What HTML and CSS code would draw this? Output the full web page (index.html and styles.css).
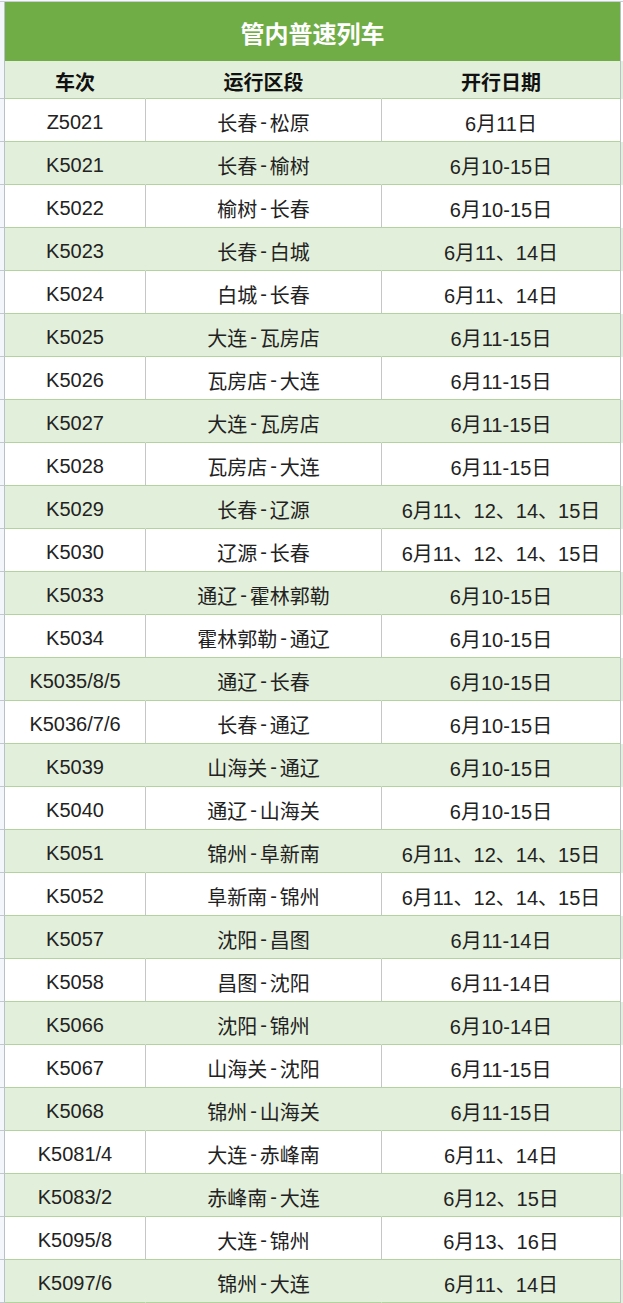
FILE: index.html
```html
<!DOCTYPE html>
<html lang="zh">
<head>
<meta charset="utf-8">
<link rel="stylesheet" href="styles.css">
</head>
<body>
<div class="sheet">
  <div class="topline"></div>
  <div class="row title-row"><div class="gut"></div><div class="title">管内普速列车</div></div>
  <div class="row head-row"><div class="gut"></div><div class="c c1">车次</div><div class="c c2">运行区段</div><div class="c c3">开行日期</div></div>
  <div class="row w"><div class="gut"></div><div class="c c1">Z5021</div><div class="c c2">长春<span class="d">-</span>松原</div><div class="c c3">6月11日</div></div>
  <div class="row g"><div class="gut"></div><div class="c c1">K5021</div><div class="c c2">长春<span class="d">-</span>榆树</div><div class="c c3">6月10-15日</div></div>
  <div class="row w"><div class="gut"></div><div class="c c1">K5022</div><div class="c c2">榆树<span class="d">-</span>长春</div><div class="c c3">6月10-15日</div></div>
  <div class="row g"><div class="gut"></div><div class="c c1">K5023</div><div class="c c2">长春<span class="d">-</span>白城</div><div class="c c3">6月11、14日</div></div>
  <div class="row w"><div class="gut"></div><div class="c c1">K5024</div><div class="c c2">白城<span class="d">-</span>长春</div><div class="c c3">6月11、14日</div></div>
  <div class="row g"><div class="gut"></div><div class="c c1">K5025</div><div class="c c2">大连<span class="d">-</span>瓦房店</div><div class="c c3">6月11-15日</div></div>
  <div class="row w"><div class="gut"></div><div class="c c1">K5026</div><div class="c c2">瓦房店<span class="d">-</span>大连</div><div class="c c3">6月11-15日</div></div>
  <div class="row g"><div class="gut"></div><div class="c c1">K5027</div><div class="c c2">大连<span class="d">-</span>瓦房店</div><div class="c c3">6月11-15日</div></div>
  <div class="row w"><div class="gut"></div><div class="c c1">K5028</div><div class="c c2">瓦房店<span class="d">-</span>大连</div><div class="c c3">6月11-15日</div></div>
  <div class="row g"><div class="gut"></div><div class="c c1">K5029</div><div class="c c2">长春<span class="d">-</span>辽源</div><div class="c c3">6月11、12、14、15日</div></div>
  <div class="row w"><div class="gut"></div><div class="c c1">K5030</div><div class="c c2">辽源<span class="d">-</span>长春</div><div class="c c3">6月11、12、14、15日</div></div>
  <div class="row g"><div class="gut"></div><div class="c c1">K5033</div><div class="c c2">通辽<span class="d">-</span>霍林郭勒</div><div class="c c3">6月10-15日</div></div>
  <div class="row w"><div class="gut"></div><div class="c c1">K5034</div><div class="c c2">霍林郭勒<span class="d">-</span>通辽</div><div class="c c3">6月10-15日</div></div>
  <div class="row g"><div class="gut"></div><div class="c c1">K5035/8/5</div><div class="c c2">通辽<span class="d">-</span>长春</div><div class="c c3">6月10-15日</div></div>
  <div class="row w"><div class="gut"></div><div class="c c1">K5036/7/6</div><div class="c c2">长春<span class="d">-</span>通辽</div><div class="c c3">6月10-15日</div></div>
  <div class="row g"><div class="gut"></div><div class="c c1">K5039</div><div class="c c2">山海关<span class="d">-</span>通辽</div><div class="c c3">6月10-15日</div></div>
  <div class="row w"><div class="gut"></div><div class="c c1">K5040</div><div class="c c2">通辽<span class="d">-</span>山海关</div><div class="c c3">6月10-15日</div></div>
  <div class="row g"><div class="gut"></div><div class="c c1">K5051</div><div class="c c2">锦州<span class="d">-</span>阜新南</div><div class="c c3">6月11、12、14、15日</div></div>
  <div class="row w"><div class="gut"></div><div class="c c1">K5052</div><div class="c c2">阜新南<span class="d">-</span>锦州</div><div class="c c3">6月11、12、14、15日</div></div>
  <div class="row g"><div class="gut"></div><div class="c c1">K5057</div><div class="c c2">沈阳<span class="d">-</span>昌图</div><div class="c c3">6月11-14日</div></div>
  <div class="row w"><div class="gut"></div><div class="c c1">K5058</div><div class="c c2">昌图<span class="d">-</span>沈阳</div><div class="c c3">6月11-14日</div></div>
  <div class="row g"><div class="gut"></div><div class="c c1">K5066</div><div class="c c2">沈阳<span class="d">-</span>锦州</div><div class="c c3">6月10-14日</div></div>
  <div class="row w"><div class="gut"></div><div class="c c1">K5067</div><div class="c c2">山海关<span class="d">-</span>沈阳</div><div class="c c3">6月11-15日</div></div>
  <div class="row g"><div class="gut"></div><div class="c c1">K5068</div><div class="c c2">锦州<span class="d">-</span>山海关</div><div class="c c3">6月11-15日</div></div>
  <div class="row w"><div class="gut"></div><div class="c c1">K5081/4</div><div class="c c2">大连<span class="d">-</span>赤峰南</div><div class="c c3">6月11、14日</div></div>
  <div class="row g"><div class="gut"></div><div class="c c1">K5083/2</div><div class="c c2">赤峰南<span class="d">-</span>大连</div><div class="c c3">6月12、15日</div></div>
  <div class="row w"><div class="gut"></div><div class="c c1">K5095/8</div><div class="c c2">大连<span class="d">-</span>锦州</div><div class="c c3">6月13、16日</div></div>
  <div class="row g"><div class="gut"></div><div class="c c1">K5097/6</div><div class="c c2">锦州<span class="d">-</span>大连</div><div class="c c3">6月11、14日</div></div>
</div>
</body>
</html>
```

FILE: styles.css
```css
* { box-sizing: border-box; }
html, body { margin: 0; padding: 0; background: #ffffff; }
body {
  font-family: "Liberation Sans", "Noto Sans CJK SC", sans-serif;
  color: #222222;
}
.sheet { width: 623px; }
.topline {
  height: 2px;
  border-bottom: 1px solid #c9ced4;
  background: #f6f8fb;
}
.row {
  display: grid;
  grid-template-columns: 5px 141px 236px 239px;
  height: 43px;
}
.gut {
  background: #f3f6fa;
  border-right: 1px solid #b9c0cc;
  border-bottom: 1px solid #c3c7cf;
}
.title-row {
  height: 59px;
  grid-template-columns: 5px 616px;
}
.title-row .gut { border-bottom: none; }
.title {
  background: #70ad47;
  color: #ffffff;
  font-size: 24px;
  font-weight: bold;
  display: flex;
  align-items: center;
  justify-content: center;
  border-right: 1px solid #b9c0cc;
  padding-top: 2px;
}
.head-row {
  height: 38px;
  background: #e2efda;
}
.head-row .c { font-weight: bold; color: #111111; }
.c {
  display: flex;
  align-items: center;
  justify-content: center;
  font-size: 20px;
  padding-top: 4px;
  border-right: 1px solid #c6c6c6;
  border-bottom: 1px solid #b3d39e;
  white-space: nowrap;
}
.d { padding: 0 3px; }
.g { background: #e2efda; }
.g .c1, .g .c2, .head-row .c1, .head-row .c2 { border-right-color: #e2efda; }
.g .c3, .head-row .c3 { border-right-color: #b9c0cc; }
.w { background: #ffffff; }
.w .c3 { border-right-color: #b9c0cc; }
```
